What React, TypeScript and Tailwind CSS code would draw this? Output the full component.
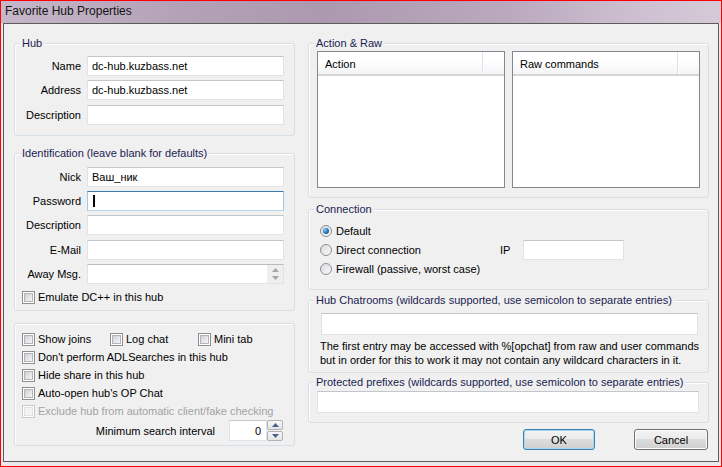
import React from "react";
import clsx from "clsx";

// Win7 basic-theme look: group boxes, text boxes, checkboxes and radios
const Group = ({
  label,
  className,
  children,
}: {
  label?: string;
  className?: string;
  children?: React.ReactNode;
}) => (
  <div className={clsx("relative border border-[#d5dfe5] rounded-[3px] shadow-[inset_1px_1px_0_#ffffff]", className)}>
    {label && (
      <span className="absolute left-[5px] top-[-8px] px-[2px] bg-[#f0f0f0] leading-[14px] text-[#1a2350] whitespace-nowrap">
        {label}
      </span>
    )}
    {children}
  </div>
);

const TextBox = ({
  value,
  className,
  focused,
}: {
  value?: string;
  className?: string;
  focused?: boolean;
}) => (
  <div
    className={clsx(
      "h-[20px] bg-white border flex items-center pl-[4px] text-black whitespace-nowrap",
      focused
        ? "border-[#a4c9e3] border-t-[#3d7bad] border-b-[#b7d9ed]"
        : "border-[#e0e3e8] border-t-[#c3c6cb]",
      className
    )}
  >
    {focused && <span className="w-[2px] h-[12px] bg-black ml-[1px]" />}
    {value}
  </div>
);

const Field = ({
  label,
  className,
  children,
}: {
  label: string;
  className?: string;
  children: React.ReactNode;
}) => (
  <div className={clsx("flex items-center", className)}>
    <span className="w-[66px] text-right whitespace-nowrap">{label}</span>
    <div className="ml-[6px] w-[197px]">{children}</div>
  </div>
);

const Check = ({ label, disabled, className }: { label: string; disabled?: boolean; className?: string }) => (
  <div className={clsx("flex items-center gap-[3px] whitespace-nowrap", disabled && "text-[#a3a3a3]", className)}>
    <div
      className={clsx(
        "w-[13px] h-[13px] border flex items-center justify-center bg-white shrink-0",
        disabled ? "border-[#c8c8c8]" : "border-[#8e8f8f]"
      )}
    >
      <div
        className={clsx(
          "w-[9px] h-[9px] border",
          disabled
            ? "border-[#e2e2e2] bg-[#f4f4f4]"
            : "border-[#b1b5ba] bg-gradient-to-br from-[#cdd1d6] to-[#f6f6f6]"
        )}
      />
    </div>
    <span>{label}</span>
  </div>
);

const Radio = ({ label, checked }: { label: string; checked?: boolean }) => (
  <div className="flex items-center gap-[4px] whitespace-nowrap">
    <div className="w-[12px] h-[12px] rounded-full border border-[#8e8f8f] bg-gradient-to-br from-[#d6d9dd] to-[#fbfbfb] flex items-center justify-center shrink-0">
      {checked && (
        <div className="w-[6px] h-[6px] rounded-full bg-[radial-gradient(circle_at_35%_35%,#8fd0f5_0%,#2a7bbd_45%,#0c3f70_100%)]" />
      )}
    </div>
    <span>{label}</span>
  </div>
);

const ListBox = ({ title }: { title: string }) => (
  <div className="w-[188px] h-[137px] border border-[#828790] bg-white flex flex-col">
    <div className="h-[24px] flex bg-[linear-gradient(to_bottom,#ffffff_0%,#ffffff_40%,#f3f4f6_100%)] border-b-[2px] border-[#d5d5d5]">
      <div className="w-[165px] flex items-center pl-[7px] pt-[2px] border-r border-[#dfe2e6] shadow-[1px_0_0_#ffffff]">
        {title}
      </div>
      <div className="flex-1" />
    </div>
  </div>
);

const Arrow = ({ up, color }: { up?: boolean; color: string }) => (
  <svg width="7" height="4" viewBox="0 0 7 4">
    <path d={up ? "M0 4 L3.5 0 L7 4 Z" : "M0 0 L3.5 4 L7 0 Z"} fill={color} />
  </svg>
);

const Button = ({ label, primary, className }: { label: string; primary?: boolean; className?: string }) => (
  <div
    className={clsx(
      "h-[21px] rounded-[3px] border flex items-center justify-center bg-[linear-gradient(to_bottom,#f2f2f2_0%,#ebebeb_50%,#dddddd_50%,#cfcfcf_100%)]",
      primary ? "border-[#3c7fb1] shadow-[inset_0_0_0_1px_#a7d8f5]" : "border-[#707070] shadow-[inset_0_0_0_1px_#fcfcfc]",
      className
    )}
  >
    {label}
  </div>
);

export default function App() {
  return (
    <div className="w-[722px] h-[467px] border border-[#ff0000] flex flex-col bg-[#ece7ed] text-[11px] leading-[14px] text-black font-['Liberation_Sans',Arial,sans-serif] select-none">
      {/* title bar */}
      <div className="h-[22px] flex items-center pl-[4px] pb-[3px] text-[12px] text-[#141414] bg-[linear-gradient(to_right,#c7b7ca_0%,#b3a1b6_25%,#ac99af_45%,#baa8bd_70%,#cdbfd0_88%,#d5cad8_100%)]">
        Favorite Hub Properties
      </div>

      <div className="flex-1 px-[2px] pb-[4px]">
        <div className="h-full border border-[#5c5c5c] bg-[#f0f0f0] flex pl-[10px] pr-[9px] gap-[13px]">
          {/* left column */}
          <div className="w-[281px] flex flex-col pt-[19px]">
            <Group label="Hub" className="h-[93px] pt-[12px]">
              <Field label="Name">
                <TextBox value="dc-hub.kuzbass.net" />
              </Field>
              <Field label="Address" className="mt-[4px]">
                <TextBox value="dc-hub.kuzbass.net" />
              </Field>
              <Field label="Description" className="mt-[5px]">
                <TextBox />
              </Field>
            </Group>

            <Group label="Identification (leave blank for defaults)" className="h-[158px] mt-[17px] pt-[13px]">
              <Field label="Nick">
                <TextBox value="Ваш_ник" />
              </Field>
              <Field label="Password" className="mt-[4px]">
                <TextBox focused />
              </Field>
              <Field label="Description" className="mt-[4px]">
                <TextBox />
              </Field>
              <Field label="E-Mail" className="mt-[5px]">
                <TextBox />
              </Field>
              <Field label="Away Msg." className="mt-[4px]">
                <div className="h-[20px] bg-white border border-[#e0e3e8] border-t-[#b9bcc1] flex justify-end">
                  <div className="w-[16px] h-full bg-[#efefef] flex flex-col items-center justify-center gap-[4px]">
                    <Arrow up color="#a6a6a6" />
                    <Arrow color="#a6a6a6" />
                  </div>
                </div>
              </Field>
              <div className="mt-[6px] h-[14px] flex items-center pl-[7px]">
                <Check label="Emulate DC++ in this hub" />
              </div>
            </Group>

            <Group className="h-[123px] mt-[12px] pt-[6px] pl-[7px]">
              <div className="h-[18px] flex items-center">
                <Check label="Show joins" className="w-[88px]" />
                <Check label="Log chat" className="w-[88px]" />
                <Check label="Mini tab" />
              </div>
              <div className="h-[18px] flex items-center">
                <Check label="Don't perform ADLSearches in this hub" />
              </div>
              <div className="h-[18px] flex items-center">
                <Check label="Hide share in this hub" />
              </div>
              <div className="h-[18px] flex items-center">
                <Check label="Auto-open hub's OP Chat" />
              </div>
              <div className="h-[18px] flex items-center">
                <Check label="Exclude hub from automatic client/fake checking" disabled />
              </div>
              <div className="h-[21px] flex items-center justify-end pr-[11px]">
                <span>Minimum search interval</span>
                <div className="ml-[14px] w-[38px] h-[21px] bg-white border border-[#e0e3e8] border-t-[#c3c6cb] flex items-center justify-end pr-[5px]">
                  0
                </div>
                <div className="w-[16px] h-[21px] flex flex-col gap-[1px]">
                  <div className="flex-1 border border-[#adb2b5] rounded-[2px] bg-gradient-to-b from-[#f7f7f7] to-[#e4e4e4] flex items-center justify-center">
                    <Arrow up color="#4a5f8c" />
                  </div>
                  <div className="flex-1 border border-[#adb2b5] rounded-[2px] bg-gradient-to-b from-[#f7f7f7] to-[#e4e4e4] flex items-center justify-center">
                    <Arrow color="#4a5f8c" />
                  </div>
                </div>
              </div>
            </Group>
          </div>

          {/* right column */}
          <div className="w-[401px] flex flex-col pt-[19px]">
            <Group label="Action & Raw" className="h-[155px] pt-[7px] px-[8px] flex gap-[7px]">
              <ListBox title="Action" />
              <ListBox title="Raw commands" />
            </Group>

            <Group label="Connection" className="h-[81px] mt-[11px] pt-[11px] pl-[11px]">
              <div className="h-[19px] flex items-center">
                <Radio label="Default" checked />
              </div>
              <div className="h-[19px] flex items-center">
                <div className="w-[180px]">
                  <Radio label="Direct connection" />
                </div>
                <span className="w-[23px]">IP</span>
                <TextBox className="w-[101px]" />
              </div>
              <div className="h-[19px] flex items-center">
                <Radio label="Firewall (passive, worst case)" />
              </div>
            </Group>

            <Group
              label="Hub Chatrooms (wildcards supported, use semicolon to separate entries)"
              className="h-[73px] mt-[10px] pt-[12px]"
            >
              <TextBox className="ml-[12px] w-[377px] h-[22px]" />
              <p className="mt-[4px] pl-[11px] whitespace-nowrap">
                The first entry may be accessed with %[opchat] from raw and user commands
                <br />
                but in order for this to work it may not contain any wildcard characters in it.
              </p>
            </Group>

            <Group
              label="Protected prefixes (wildcards supported, use semicolon to separate entries)"
              className="h-[41px] mt-[9px] pt-[8px] pl-[8px]"
            >
              <TextBox className="w-[382px] h-[22px]" />
            </Group>

            <div className="mt-[6px] flex justify-end gap-[39px] pr-[1px]">
              <Button label="OK" primary className="w-[72px]" />
              <Button label="Cancel" className="w-[74px]" />
            </div>
          </div>
        </div>
      </div>
    </div>
  );
}
